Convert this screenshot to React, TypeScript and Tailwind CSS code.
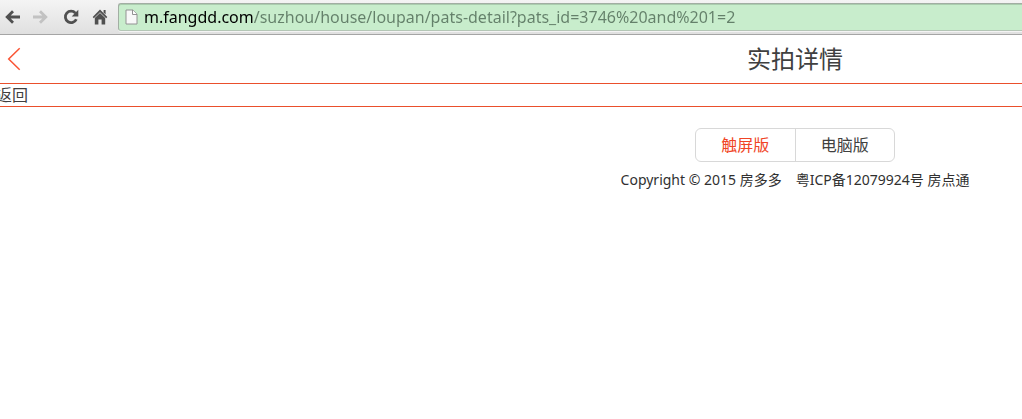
import React from "react";

const iconButton = "flex h-7 w-[29px] shrink-0 items-center justify-center";

function Toolbar() {
  return (
    <div className="flex h-[35px] items-start border-b border-[#a5a5a5] bg-linear-to-b from-[#f4f4f4] to-[#e0e0e0] pt-[3px]">
      <nav aria-label="Browser" className="flex w-[118px] shrink-0">
        <button type="button" aria-label="Back" className="flex h-7 w-[25px] shrink-0 items-center justify-center">
          <svg width="17" height="16" viewBox="0 0 17 16" fill="none" stroke="#505050" strokeWidth="2.8">
            <path d="M16 8H3M9 2.3L3.2 8L9 13.7" />
          </svg>
        </button>
        <button type="button" aria-label="Forward" className="flex h-7 w-[31px] shrink-0 items-center justify-center" disabled>
          <svg width="17" height="16" viewBox="0 0 17 16" fill="none" stroke="#c2c2c2" strokeWidth="2.8">
            <path d="M1 8H14M8 2.3L13.8 8L8 13.7" />
          </svg>
        </button>
        <button type="button" aria-label="Reload" className={iconButton}>
          <svg width="16" height="16" viewBox="0 0 16 16">
            <path d="M12.4 4.2A5.7 5.7 0 1 0 13.3 10.2" fill="none" stroke="#505050" strokeWidth="2.8" />
            <path d="M15.3 0.8V7.4H8.7Z" fill="#505050" />
          </svg>
        </button>
        <button type="button" aria-label="Home" className={iconButton}>
          <svg width="16" height="16" viewBox="0 0 16 16" fill="#505050">
            <path d="M8 0.6L15.3 8L14.2 9.3L8 3.2L1.8 9.3L0.7 8Z" />
            <path d="M11.6 1H13.6V5.5L11.6 3.5Z" />
            <path d="M8 4L13.2 9.1V15.5H9.6V10.5H6.4V15.5H2.8V9.1Z" />
          </svg>
        </button>
      </nav>
      <div className="flex h-7 min-w-0 flex-1 items-center gap-[6px] rounded-l-[3px] border border-r-0 border-[#a2aea3] border-b-[#b4c6b6] bg-[#c8edcc] pl-[6px] shadow-[inset_0_1px_0_#aacdae,0_1px_0_#f4f4f4]">
        <svg className="shrink-0" width="13" height="16" viewBox="0 0 13 16">
          <path d="M1 1H7.8L12 5.2V15H1Z" fill="#f8f8f8" stroke="#929292" />
          <path d="M7.5 1V5.5H12" fill="#fff" stroke="#929292" />
        </svg>
        <input
          type="text"
          aria-label="Address"
          spellCheck={false}
          defaultValue="m.fangdd.com/suzhou/house/loupan/pats-detail?pats_id=3746%20and%201=2"
          className="min-w-0 flex-1 bg-linear-to-r from-black from-[110px] to-[#64806a] to-[110px] bg-clip-text text-base leading-6 text-transparent caret-black outline-none"
        />
      </div>
    </div>
  );
}

export default function App() {
  return (
    <div className="min-h-screen overflow-hidden bg-white font-['Noto_Sans','Noto_Sans_CJK_SC',sans-serif] text-[#404040]">
      <Toolbar />
      <div className="min-w-[1590px]">
        <header className="grid h-[49px] grid-cols-[1fr_auto_1fr] items-center border-b border-[#ea4f2c]">
          <a href="#back" aria-label="返回上一页" className="w-fit pl-[7px]">
            <svg width="14" height="24" viewBox="0 0 14 24" fill="none" stroke="#fa5434" strokeWidth="1.5">
              <path d="M12.7 1.2L1.7 12L12.7 22.8" />
            </svg>
          </a>
          <h1 className="text-2xl">实拍详情</h1>
        </header>
        <div className="-ml-1 border-b border-[#ea4f2c]">
          <a href="#back" className="block text-base leading-[22px]">返回</a>
        </div>
        <footer className="flex flex-col items-center pt-[21px]">
          <nav aria-label="版本" className="flex h-[34px] w-[200px] rounded-md border border-[#d8d8d8] text-base leading-8">
            <a href="#touch" className="flex-1 border-r border-[#d8d8d8] text-center text-[#f04425]">触屏版</a>
            <a href="#desktop" className="flex-1 text-center">电脑版</a>
          </nav>
          <p className="mt-2 text-sm text-[#303030]">Copyright © 2015 房多多　粤ICP备12079924号 房点通</p>
        </footer>
      </div>
    </div>
  );
}
